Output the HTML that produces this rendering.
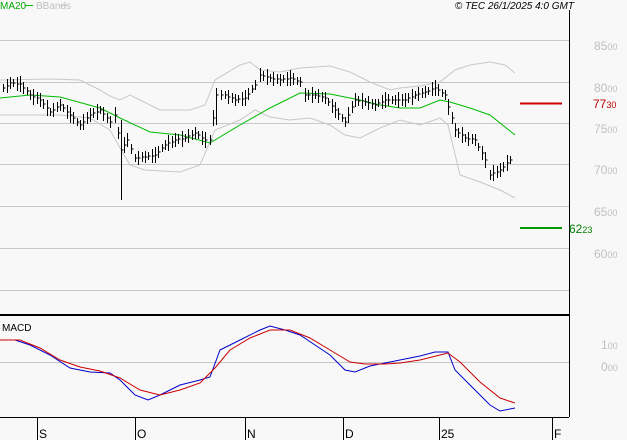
<!DOCTYPE html>
<html><head><meta charset="utf-8"><style>
html,body{margin:0;padding:0;background:#f8f8f8;width:627px;height:440px;overflow:hidden;font-family:"Liberation Sans",sans-serif}
svg{display:block}
text{font-family:"Liberation Sans",sans-serif}
</style></head><body>
<svg id="s" width="627" height="440" xmlns="http://www.w3.org/2000/svg">
<rect width="627" height="440" fill="#f8f8f8"/>
<g stroke="#c8c8c8" stroke-width="1">
<line x1="0" y1="40.5" x2="569" y2="40.5"/><line x1="0" y1="82.5" x2="569" y2="82.5"/>
<line x1="0" y1="123.5" x2="569" y2="123.5"/><line x1="0" y1="164.5" x2="569" y2="164.5"/>
<line x1="0" y1="206.5" x2="569" y2="206.5"/><line x1="0" y1="248.5" x2="569" y2="248.5"/>
<line x1="0" y1="290.5" x2="569" y2="290.5"/><line x1="0" y1="362.5" x2="569" y2="362.5"/>
</g>
<line x1="569.5" y1="10" x2="569.5" y2="417" stroke="#000"/>
<line x1="0" y1="315" x2="569" y2="315" stroke="#000" stroke-width="2"/>
<line x1="0" y1="417.5" x2="569" y2="417.5" stroke="#000"/>
<g stroke="#000"><line x1="37.5" y1="417" x2="37.5" y2="440"/><line x1="135.5" y1="417" x2="135.5" y2="440"/><line x1="245.5" y1="417" x2="245.5" y2="440"/><line x1="343.5" y1="417" x2="343.5" y2="440"/><line x1="439.5" y1="417" x2="439.5" y2="440"/><line x1="552.5" y1="417" x2="552.5" y2="440"/></g>
<g font-size="12" fill="#000"><text x="39" y="438">S</text><text x="137" y="438">O</text><text x="247" y="438">N</text><text x="345" y="438">D</text><text x="441" y="438">25</text><text x="554" y="438">F</text></g>
<g font-size="12" fill="#c0c0c0"><text x="594" y="50">85<tspan font-size="9">00</tspan></text><text x="594" y="92">80<tspan font-size="9">00</tspan></text><text x="594" y="133">75<tspan font-size="9">00</tspan></text><text x="594" y="174">70<tspan font-size="9">00</tspan></text><text x="594" y="216">65<tspan font-size="9">00</tspan></text><text x="594" y="258">60<tspan font-size="9">00</tspan></text>
<text x="601" y="349">1<tspan font-size="9">00</tspan></text><text x="601" y="371">0<tspan font-size="9">00</tspan></text></g>
<text x="593" y="108" font-size="12" fill="#c00000">77<tspan font-size="9">30</tspan></text>
<text x="569" y="233" font-size="12" fill="#008000">62<tspan font-size="9">23</tspan></text>
<line x1="520" y1="103.5" x2="562" y2="103.5" stroke="#cc0000" stroke-width="2"/>
<line x1="520" y1="228" x2="562" y2="228" stroke="#009900" stroke-width="2"/>
<text x="0" y="9" font-size="10" fill="#00aa00">MA20</text><line x1="25" y1="5.5" x2="33" y2="5.5" stroke="#00bb00"/>
<text x="36" y="9" font-size="10" fill="#c0c0c0">BBands</text><line x1="60" y1="5.5" x2="68" y2="5.5" stroke="#c8c8c8"/>
<text x="574" y="9" font-size="10" font-style="italic" text-anchor="end" fill="#000">© TEC 26/1/2025 4:0 GMT</text>
<text x="2" y="331" font-size="10" fill="#000">MACD</text>
<polyline fill="none" stroke="#c8c8c8" points="0,80 50,79 80,80 90,85 100,90 110,96 120,100 130,95 160,110 190,110 205,105 215,80 240,65 250,62 260,70 280,72 300,68 330,66 350,72 370,82 390,90 400,88 420,86 440,82 455,70 470,65 490,62 505,65 515,73"/>
<polyline fill="none" stroke="#c8c8c8" points="0,115 60,115 90,118 110,130 120,148 130,165 145,170 180,172 200,165 215,130 240,120 255,110 270,117 290,120 310,118 330,125 345,135 360,138 380,128 400,120 420,125 440,118 448,125 460,175 480,182 500,190 515,198"/>
<polyline fill="none" stroke="#00bb00" points="0,98 30,95 60,97 100,108 120,118 150,132 180,135 210,143 240,125 270,108 300,93 330,94 360,100 380,105 400,108 420,108 440,100 450,102 470,108 490,115 515,135"/>
<polyline fill="none" stroke="#0000cc" points="0,340 15,340 30,345 50,355 70,368 90,372 110,373 120,380 135,395 148,400 160,395 180,385 200,380 210,377 220,350 240,340 260,330 270,326 285,330 300,335 315,345 330,355 345,370 355,372 370,366 385,363 400,360 420,356 435,352 448,352 455,370 470,385 490,405 500,411 515,408"/>
<polyline fill="none" stroke="#cc0000" points="0,340 20,340 40,348 60,360 80,367 100,371 120,378 140,390 160,395 180,390 200,383 215,368 230,350 250,338 270,330 290,330 310,338 330,350 350,362 365,364 385,364 400,363 420,360 440,355 448,353 460,362 480,382 500,398 515,403"/>
<path id="bars" stroke="#000" fill="none" d=""/>
</svg>
<script>
var pts=[[3,88],[10,83],[20,84],[30,95],[40,100],[50,112],[60,105],[70,115],[80,125],[90,115],[100,110],[110,122],[115,115],[121,150],[127,140],[135,158],[145,157],[155,155],[165,145],[175,140],[185,138],[195,133],[205,140],[210,140],[216,95],[225,95],[235,100],[245,98],[255,85],[260,75],[270,78],[280,80],[290,78],[300,82],[305,95],[315,95],[325,98],[335,110],[345,122],[355,100],[365,102],[375,105],[385,100],[395,100],[405,100],[415,95],[425,92],[435,88],[445,95],[455,130],[465,138],[475,140],[485,160],[490,175],[500,170],[510,160],[515,158]];
var d="";
for(var i=0;i<pts.length-1;i++){var a=pts[i],b=pts[i+1];var n=Math.max(1,Math.round((b[0]-a[0])/4));
for(var k=0;k<n;k++){var x=Math.round(a[0]+(b[0]-a[0])*k/n)+.5,y=Math.round(a[1]+(b[1]-a[1])*k/n);var h=4+((i*7+k*3)%5);
d+="M"+x+","+(y-h)+"V"+(y+h)+"M"+x+","+y+"h2";}}
d+="M121.5,120V200M216.5,88V125";
document.getElementById("bars").setAttribute("d",d);
</script>
</body></html>
